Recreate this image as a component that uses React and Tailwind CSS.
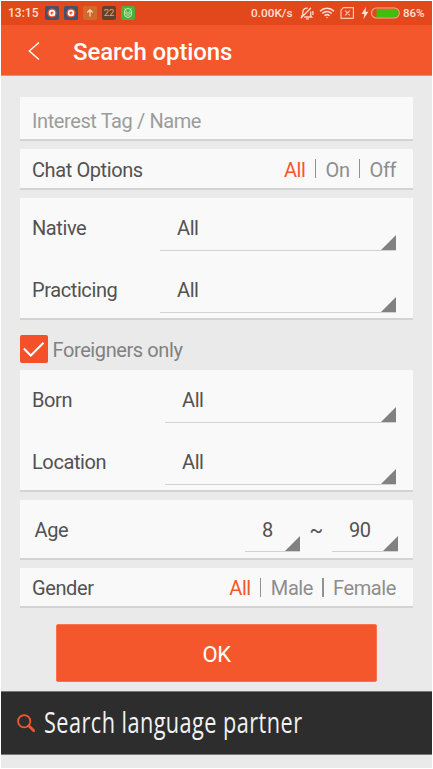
import React from 'react';

function Corner() {
  return (
    <svg className="block h-[15px] w-[15px] shrink-0" viewBox="0 0 15 15">
      <path d="M15 0V15H0Z" fill="#818181" />
    </svg>
  );
}

function Select({ value, className, textClass = 'h-[34px]' }) {
  return (
    <div className={`flex h-10 items-end justify-between border-b border-[#d2d2d2] ${className}`}>
      <span className={`leading-6 ${textClass}`}>{value}</span>
      <Corner />
    </div>
  );
}

function Card({ className, children }) {
  return (
    <section className={`border-b-2 border-[#d3d3d3] bg-[#f9f9f9] ${className}`}>{children}</section>
  );
}

function Divider() {
  return <i className="ml-[9px] mr-[9.5px] h-[19px] w-[1.5px] -translate-y-[1px] bg-[#929292]" />;
}

function MailIcon() {
  return (
    <svg className="h-[14px] w-[14px]" viewBox="0 0 14 14">
      <rect width="14" height="14" rx="2" fill="#49506b" />
      <circle cx="7" cy="7" r="4.6" fill="#e6532f" />
      <circle cx="7" cy="7" r="2.4" fill="#e6532f" stroke="#fff" strokeWidth="1.7" />
      <path d="M7.6 7.4l2 2" stroke="#fff" strokeWidth="1.2" />
    </svg>
  );
}

function StatusBar() {
  return (
    <div className="flex h-6 items-center justify-between bg-[#e3471c] pl-[7px] pr-[7px] text-[12px] font-medium tracking-normal text-[#ffe1d6]">
      <div className="flex items-center gap-[5px]">
        <span className="mr-[1px] w-[31px] whitespace-nowrap">13:15</span>
        <MailIcon />
        <MailIcon />
        <svg className="h-[14px] w-[14px]" viewBox="0 0 14 14">
          <rect width="14" height="14" rx="2" fill="#cd6a2d" />
          <path d="M7 10.5V4M4.3 6.5L7 3.9l2.7 2.6" fill="none" stroke="#fbd9bd" strokeWidth="1.2" />
        </svg>
        <span className="flex h-[14px] w-[14px] items-center justify-center rounded-[2px] bg-[#65402f] text-[9.5px] font-normal text-[#e0a866]">
          22
        </span>
        <svg className="h-[14px] w-[14px]" viewBox="0 0 14 14">
          <rect width="14" height="14" rx="2" fill="#4caf3c" />
          <g fill="none" stroke="#d4f5c8" strokeWidth=".9">
            <path d="M3.4 6.2a3.6 3.6 0 0 1 7.2 0v1.6a3.6 3.6 0 0 1-7.2 0ZM3.4 7h7.2M4.6 3.8L3.6 2.3M9.4 3.8l1-1.5M5.2 9h3.6" />
            <path d="M5.3 4.8v1M8.7 4.8v1" />
          </g>
        </svg>
      </div>
      <div className="flex items-center">
        <span className="w-[44px] whitespace-nowrap text-[11.8px]">0.00K/s</span>
        <svg className="ml-[4px] h-[14px] w-[16px]" viewBox="0 0 16 14" fill="none" stroke="#ffd9cb" strokeWidth="1.3">
          <path d="M3.8 9.5V6a4 4 0 0 1 5-3.8M11.7 5.5v4.2l1 1.3H5.2M7 12.9h2.8M1.8 12.2L12 1.8M2 9.8h2M13.9 5v4" />
        </svg>
        <svg className="ml-[4px] h-[12px] w-[16px]" viewBox="0 0 16 12" fill="none" stroke="#ffdfd4" strokeWidth="1.5">
          <path d="M1 4.2a10 10 0 0 1 14 0M3.3 6.5a6.8 6.8 0 0 1 9.4 0M5.5 8.8a3.7 3.7 0 0 1 5 0" />
          <circle cx="8" cy="10.5" r=".8" fill="#ffdfd4" stroke="none" />
        </svg>
        <svg className="ml-[5px] h-[12px] w-[15px]" viewBox="0 0 15 12" fill="none" stroke="#ffc5b1" strokeWidth="1.2">
          <path d="M3.4.7h10v10.6H1V3.2ZM5.2 3.7l4.6 4.6M9.8 3.7L5.2 8.3" />
        </svg>
        <svg className="ml-[6px] h-[12px] w-[8px]" viewBox="0 0 8 12">
          <path d="M5 0L.5 7h2.8L2.5 12 7.5 4.8H4.6Z" fill="#ffe1d6" />
        </svg>
        <svg className="ml-[2px] h-[12px] w-[29px]" viewBox="0 0 29 12">
          <rect x=".6" y="1" width="27.6" height="10" rx="4.8" fill="none" stroke="#ffae90" strokeWidth="1.1" />
          <path d="M5.5 2H23.5a4 4 0 0 1 0 8H5.5Z" fill="#43bd0b" />
        </svg>
        <span className="ml-[3px] w-[22px] whitespace-nowrap text-[11.5px]">86%</span>
      </div>
    </div>
  );
}

export default function App() {
  return (
    <div className="h-[769px] w-[433px] overflow-hidden border border-white bg-[#eaeaea] font-['Roboto',sans-serif] text-[20px] leading-6 tracking-[-0.4px] text-[#525252]">
      <StatusBar />
      <header className="flex h-[51px] items-center border-b border-[#f58a6b] bg-[#f4572b] pl-[27px] pt-[2px] text-[24px] font-medium tracking-[-0.12px] text-white">
        <svg className="mr-[33px] h-[18px] w-[12px]" viewBox="0 0 12 18">
          <path d="M11 .5L1.3 9l9.7 8.5" fill="none" stroke="#fff" strokeWidth="1.4" />
        </svg>
        <h1 className="pt-[2px] whitespace-nowrap">Search options</h1>
      </header>

      <main className="h-[615px] pl-[19px] pr-[19px] pt-[21px]">
        <Card className="flex h-[44px] items-center pl-[12px] pt-[5px] text-[#9c9c9c]">
          <span>Interest Tag / Name</span>
        </Card>
        <Card className="mt-2 flex h-[41px] items-center justify-between pl-[12px] pr-[17px] pt-[2px]">
          <span>Chat Options</span>
          <div className="flex items-center text-[#8d8d8d]">
            <span className="text-[#f4572b]">All</span>
            <Divider />
            <span>On</span>
            <Divider />
            <span>Off</span>
          </div>
        </Card>
        <Card className="mt-2 h-[122px] pl-[12px] pr-[17px] pt-[13px]">
          <div className="flex h-[62px] justify-between">
            <span className="pt-[5px]">Native</span>
            <Select value="All" className="w-[236px] pl-[17px]" />
          </div>
          <div className="flex justify-between">
            <span className="pt-[5px]">Practicing</span>
            <Select value="All" className="w-[236px] pl-[17px]" />
          </div>
        </Card>
        <label className="flex h-[50px] items-center pt-[8px] text-[#818181]">
          <svg className="mr-[4.5px] h-7 w-7" viewBox="0 0 28 28">
            <rect width="28" height="28" rx="2" fill="#f4512a" />
            <path d="M3.8 13.5l7 7L23.5 7.8" fill="none" stroke="#fff" strokeWidth="2" />
          </svg>
          <span className="pt-[2px]">Foreigners only</span>
        </label>
        <Card className="h-[122px] pl-[12px] pr-[17px] pt-[13px]">
          <div className="flex h-[62px] justify-between">
            <span className="pt-[5px]">Born</span>
            <Select value="All" className="w-[231px] pl-[17px]" />
          </div>
          <div className="flex justify-between">
            <span className="pt-[5px]">Location</span>
            <Select value="All" className="w-[231px] pl-[17px]" />
          </div>
        </Card>
        <Card className="mt-2 flex h-[60px] pl-[14.5px] pr-[15px] pt-[12px]">
          <span className="flex-1 pt-[6px]">Age</span>
          <Select value="8" className="w-[55px] pl-[17px]" textClass="h-[33px]" />
          <span className="w-[32px] pt-[6px] text-center">~</span>
          <Select value="90" className="w-[66px] pl-[17px]" textClass="h-[33px]" />
        </Card>
        <Card className="mt-2 flex h-[40px] items-center justify-between pl-[12px] pr-[17px] pt-[2px]">
          <span>Gender</span>
          <div className="flex items-center text-[#8d8d8d]">
            <span className="text-[#f4572b]">All</span>
            <Divider />
            <span>Male</span>
            <Divider />
            <span>Female</span>
          </div>
        </Card>
        <button className="ml-[36px] mt-[16px] block h-[58px] w-[321px] rounded-[2px] border border-[#f6754f] bg-[#f4572b] pt-[4px] text-[22px] text-white">
          OK
        </button>
      </main>

      <footer className="flex h-[64px] items-center border-y border-[#717a76] bg-[#2d2d2d] pl-[16px] tracking-normal text-[#f2f2f2]">
        <svg className="mr-[9px] h-[18px] w-[18px] shrink-0" viewBox="0 0 18 18" fill="none" stroke="#f4572b">
          <circle cx="7.2" cy="7.2" r="6.1" strokeWidth="1.8" />
          <path d="M11.8 11.8l5 5" strokeWidth="2.7" strokeLinecap="round" />
        </svg>
        <span className="mb-[2px] origin-left scale-x-[0.748] whitespace-nowrap font-['Open_Sans',sans-serif] text-[29px] tracking-[0.6px]">
          Search language partner
        </span>
      </footer>
    </div>
  );
}
